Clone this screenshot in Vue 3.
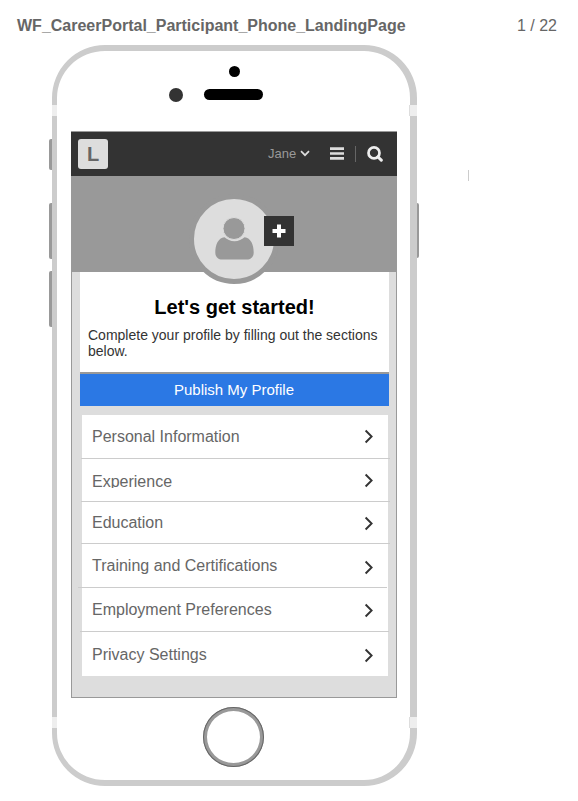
<template>
  <div class="page">
    <header class="page-header">
      <h1>WF_CareerPortal_Participant_Phone_LandingPage</h1>
      <span class="counter">1 / 22</span>
    </header>

    <div class="stage">
      <div class="phone">
        <span class="side-button mute"></span>
        <span class="side-button volume-up"></span>
        <span class="side-button volume-down"></span>
        <span class="side-button power"></span>
        <span class="antenna top-left"></span>
        <span class="antenna top-right"></span>
        <span class="antenna bottom-left"></span>
        <span class="antenna bottom-right"></span>

        <div class="sensor"></div>
        <div class="earpiece">
          <span class="camera"></span>
          <span class="speaker"></span>
        </div>

        <main class="screen">
          <nav class="navbar">
            <div class="logo">L</div>
            <div class="user">Jane</div>
            <svg class="caret" width="10" height="7" viewBox="0 0 10 7">
              <path d="M1 1.2L5 5.2L9 1.2" fill="none" stroke="#ddd" stroke-width="1.7" />
            </svg>
            <svg class="menu" width="14" height="13" viewBox="0 0 14 13">
              <path d="M0 1.7H14M0 6.5H14M0 11.3H14" stroke="#ddd" stroke-width="2.7" />
            </svg>
            <span class="divider"></span>
            <svg class="search" width="16" height="16" viewBox="0 0 16 16">
              <circle cx="7" cy="6.9" r="5.5" fill="none" stroke="#eee" stroke-width="2.7" />
              <path d="M11 11L14.3 14.2" stroke="#eee" stroke-width="3" stroke-linecap="round" />
            </svg>
          </nav>

          <section class="hero">
            <div class="avatar">
              <svg width="39" height="43" viewBox="0 0 39 43">
                <path
                  d="M9.5 19.3C3 20 .3 27 .3 34.5C.3 39 3.2 41.5 7 41.5H32C35.8 41.5 38.7 39 38.7 34.5C38.7 27 36 20 29.5 19.3C27 21.5 23.5 23.3 19.5 23.3C15.5 23.3 12 21.5 9.5 19.3Z"
                  fill="#999"
                />
                <circle cx="19" cy="10.5" r="11" fill="#999" stroke="#ddd" stroke-width="1" />
              </svg>
            </div>
            <button class="add">
              <svg width="14" height="14" viewBox="0 0 14 14">
                <path d="M7 .5V13.5M.5 7H13.5" stroke="#fff" stroke-width="4" />
              </svg>
            </button>
          </section>

          <section class="intro">
            <h2>Let's get started!</h2>
            <p>Complete your profile by filling out the sections below.</p>
          </section>

          <button class="publish">Publish My Profile</button>

          <ul class="sections">
            <li v-for="section in sections" :key="section.id" :class="section.id">
              <span class="label">{{ section.label }}</span>
              <svg class="chevron" width="9" height="14" viewBox="0 0 9 14">
                <path d="M1.6 .5L7.6 6.5L1.6 12.5" fill="none" stroke="#333" stroke-width="1.9" />
              </svg>
            </li>
          </ul>
        </main>

        <div class="home"></div>
      </div>
      <span class="tick"></span>
    </div>
  </div>
</template>

<script setup>
const sections = [
  { id: 'personal', label: 'Personal Information' },
  { id: 'experience', label: 'Experience' },
  { id: 'education', label: 'Education' },
  { id: 'training', label: 'Training and Certifications' },
  { id: 'employment', label: 'Employment Preferences' },
  { id: 'privacy', label: 'Privacy Settings' }
];
</script>

<style>
body {
  margin: 0;
  background: #fff;
}
</style>

<style scoped>
.page {
  width: 578px;
  height: 801px;
  overflow: hidden;
  box-sizing: border-box;
  font-family: "Liberation Sans", Arial, sans-serif;
}

.page * {
  box-sizing: border-box;
}

.page-header {
  display: flex;
  justify-content: space-between;
  height: 45px;
  padding: 17px 21px 0 17px;
  color: #666;
}

.page-header h1 {
  margin: 0;
  font-size: 16px;
  line-height: 18px;
}

.counter {
  font-size: 16px;
  line-height: 18px;
}

.stage {
  display: flex;
  padding-left: 52px;
}

.phone {
  position: relative;
  display: flex;
  flex-direction: column;
  width: 365px;
  height: 741px;
  padding: 15px 13px 0 14px;
  border: solid #ccc;
  border-width: 6px 7px 6px 5px;
  border-radius: 53px;
}

.side-button {
  position: absolute;
  left: -8px;
  width: 3px;
  height: 56px;
  background: #999;
  border-radius: 2px 0 0 2px;
}

.mute {
  top: 88px;
  height: 31px;
}

.volume-up {
  top: 152px;
}

.volume-down {
  top: 220px;
}

.power {
  top: 152px;
  left: auto;
  right: -9px;
  width: 2px;
  height: 55px;
  border-radius: 0 2px 2px 0;
}

.antenna {
  position: absolute;
  left: -5px;
  width: 5px;
  height: 11px;
  background: #eee;
}

.top-left,
.top-right {
  top: 54px;
}

.bottom-left,
.bottom-right {
  top: 666px;
}

.top-right,
.bottom-right {
  left: auto;
  right: -7px;
  width: 8px;
  border-left: 1px solid #ddd;
}

.sensor {
  width: 11px;
  height: 11px;
  margin-left: 158px;
  background: #000;
  border-radius: 50%;
}

.earpiece {
  display: flex;
  align-items: center;
  gap: 21px;
  height: 14px;
  margin: 11px 0 0 98px;
}

.camera {
  width: 14px;
  height: 14px;
  background: #333;
  border-radius: 50%;
}

.speaker {
  width: 59px;
  height: 11px;
  margin-bottom: 1px;
  background: #000;
  border-radius: 6px;
}

.screen {
  width: 326px;
  height: 567px;
  margin-top: 29px;
  background: #ddd;
  border: 1px solid #999;
}

.navbar {
  display: flex;
  align-items: center;
  height: 44px;
  margin: 0 -1px;
  padding: 0 14px 0 7px;
  background: #333;
}

.logo {
  width: 30px;
  height: 30px;
  margin-right: 160px;
  background: #ddd;
  border-radius: 3px;
  color: #666;
  font-size: 20px;
  font-weight: bold;
  line-height: 30px;
  text-align: center;
}

.user {
  width: 29px;
  padding-bottom: 1px;
  color: #999;
  font-size: 13px;
  line-height: 15px;
  white-space: nowrap;
}

.caret {
  margin: 0 0 1px 3px;
}

.menu {
  margin: 0 0 1px 20px;
}

.divider {
  width: 1px;
  height: 16px;
  margin: 0 11px;
  background: #666;
}

.hero {
  position: relative;
  height: 96px;
  margin: 0 -1px;
  background: #999;
}

.avatar {
  position: absolute;
  top: 18px;
  left: 118px;
  display: flex;
  justify-content: center;
  width: 90px;
  height: 90px;
  padding-top: 19px;
  background: #ddd;
  border: 5px solid #999;
  border-radius: 50%;
}

.avatar svg {
  overflow: visible;
}

.add {
  position: absolute;
  top: 40px;
  left: 193px;
  display: flex;
  align-items: center;
  justify-content: center;
  width: 30px;
  height: 30px;
  padding: 0;
  border: 0;
  background: #333;
}

.intro {
  height: 100px;
  margin: 0 7px 0 8px;
  padding: 23px 8px 0;
  background: #fff;
}

.intro h2 {
  margin: 0;
  color: #000;
  font-size: 20px;
  line-height: 24px;
  text-align: center;
}

.intro p {
  margin: 8px 0 0;
  color: #333;
  font-size: 14px;
  line-height: 16px;
}

.publish {
  display: block;
  width: 309px;
  height: 34px;
  margin-left: 8px;
  padding: 0 1px 2px 0;
  border: 0;
  border-top: 2px solid #999;
  background: #2b78e4;
  color: #fff;
  font-family: inherit;
  font-size: 15px;
}

.sections {
  width: 306px;
  margin: 9px 0 0 10px;
  padding: 0;
  list-style: none;
}

.sections li {
  position: relative;
  display: flex;
  align-items: flex-start;
  justify-content: space-between;
  height: 44px;
  padding: 12px 15px 0 10px;
  background: #fff;
}

/* rules run slightly past the list edge */
.sections li::after {
  position: absolute;
  right: -2px;
  bottom: 0;
  left: -1px;
  height: 1px;
  background: #ccc;
  content: "";
}

.label {
  margin-top: 1px;
  color: #666;
  font-size: 16px;
  line-height: 18px;
}

.chevron {
  margin-top: 3px;
  overflow: visible;
}

.sections .experience {
  height: 43px;
  padding-top: 13px;
}

.experience .label {
  height: 15px;
  overflow: hidden;
}

.experience .chevron {
  margin-top: 2px;
}

.sections .education {
  height: 42px;
  padding-top: 11px;
}

.education .chevron {
  margin-top: 4px;
}

.training .chevron {
  margin-top: 5px;
}

.employment .chevron {
  margin-top: 4px;
}

.sections .training::after {
  right: 1px;
  left: -4px;
}

.sections .employment::after {
  right: -1px;
  left: -2px;
}

.sections .privacy {
  padding-top: 13px;
}

.sections .privacy::after {
  display: none;
}

.privacy .chevron {
  margin-top: 4px;
}

.home {
  width: 61px;
  height: 60px;
  margin: 9px 0 0 132px;
  border: 4px solid #999;
  border-radius: 50%;
  outline: 1px solid #666;
  outline-offset: -1px;
}

.tick {
  width: 1px;
  height: 11px;
  margin: 125px 0 0 51px;
  background: #ccc;
}
</style>
